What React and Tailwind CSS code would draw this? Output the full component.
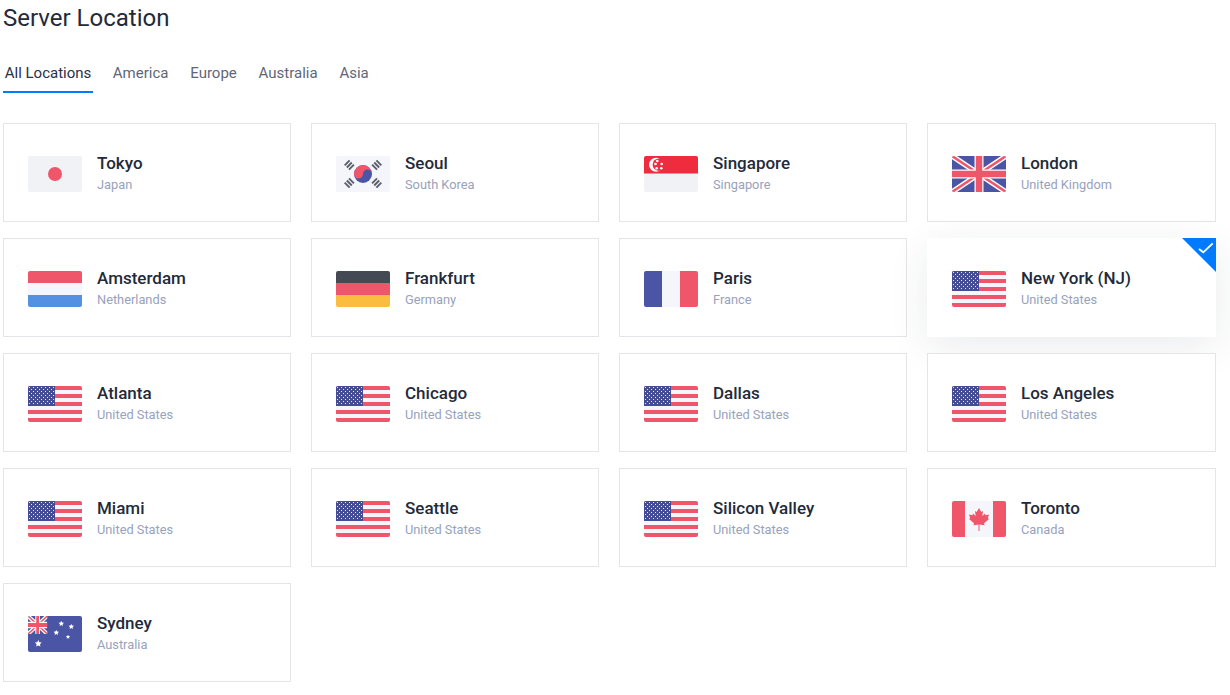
import React from "react";

const RED = "#f0566a";
const BLUE = "#4a55a5";
const NAVY = "#454c96";
const LIGHT = "#f1f2f6";
const PALE = "#f5f6fb";

const Frame = ({ children }) => (
  <svg width="54" height="36" viewBox="0 0 54 36" className="shrink-0">
    <defs>
      <clipPath id="flagClip">
        <rect width="54" height="36" rx="2" />
      </clipPath>
    </defs>
    <g clipPath="url(#flagClip)">{children}</g>
  </svg>
);

const Star = ({ x, y, r }) => {
  const pts = [];
  for (let i = 0; i < 10; i++) {
    const rad = i % 2 === 0 ? r : r * 0.5;
    const a = (Math.PI / 5) * i - Math.PI / 2;
    pts.push(`${(x + rad * Math.cos(a)).toFixed(2)},${(y + rad * Math.sin(a)).toFixed(2)}`);
  }
  return <polygon points={pts.join(" ")} fill="#fff" />;
};

const Japan = () => (
  <Frame>
    <rect width="54" height="36" fill={LIGHT} />
    <circle cx="27" cy="18" r="7" fill={RED} />
  </Frame>
);

const Trigram = ({ x, y, angle }) => (
  <g transform={`translate(${x} ${y}) rotate(${angle})`} fill="#5a5f6b">
    <rect x="-3.5" y="-4" width="7" height="1.9" />
    <rect x="-3.5" y="-0.95" width="7" height="1.9" />
    <rect x="-3.5" y="2.1" width="7" height="1.9" />
  </g>
);

const Korea = () => (
  <Frame>
    <rect width="54" height="36" fill={PALE} />
    <Trigram x={13.3} y={9} angle={-45} />
    <Trigram x={40.7} y={9} angle={45} />
    <Trigram x={13.3} y={27} angle={45} />
    <Trigram x={40.7} y={27} angle={-45} />
    <circle cx="27" cy="18" r="9" fill={BLUE} />
    <path d="M18 18a9 9 0 0 1 18 0a4.5 4.5 0 0 0-9 0a4.5 4.5 0 0 1-9 0z" fill={RED} />
  </Frame>
);

const Singapore = () => (
  <Frame>
    <rect width="54" height="36" fill={LIGHT} />
    <rect width="54" height="17.5" fill="#ef2b3d" />
    <circle cx="12" cy="8.7" r="7" fill="#fff" />
    <circle cx="14.8" cy="8.7" r="6.2" fill="#ef2b3d" />
    <circle cx="13.3" cy="5" r="1.3" fill="#fff" />
    <circle cx="17.7" cy="8" r="1.3" fill="#fff" />
    <circle cx="17.3" cy="12.3" r="1.3" fill="#fff" />
    <circle cx="12.7" cy="12.3" r="1.3" fill="#fff" />
    <circle cx="11.5" cy="8" r="1.3" fill="#fff" />
  </Frame>
);

const UK = () => (
  <Frame>
    <rect width="54" height="36" fill={BLUE} />
    <path d="M0 0L54 36M54 0L0 36" stroke="#fff" strokeWidth="5.5" />
    <path d="M0 0L54 36M54 0L0 36" stroke={RED} strokeWidth="2.5" />
    <path d="M27 0V36M0 18H54" stroke="#fff" strokeWidth="9" />
    <path d="M27 0V36M0 18H54" stroke={RED} strokeWidth="6.5" />
  </Frame>
);

const Bands = ({ a, b, c }) => (
  <Frame>
    <rect width="54" height="12" fill={a} />
    <rect y="12" width="54" height="12" fill={b} />
    <rect y="24" width="54" height="12" fill={c} />
  </Frame>
);

const France = () => (
  <Frame>
    <rect width="18" height="36" fill={BLUE} />
    <rect x="18" width="18" height="36" fill={PALE} />
    <rect x="36" width="18" height="36" fill={RED} />
  </Frame>
);

const US = () => {
  const dots = [];
  for (let r = 0; r < 9; r++) {
    const odd = r % 2 === 1;
    for (let c = 0; c < (odd ? 6 : 7); c++) {
      dots.push(<rect key={`${r}-${c}`} x={(odd ? 3 : 1) + c * 4} y={1 + r * 2} width="1" height="1" fill="#e9eaf5" />);
    }
  }
  return (
    <Frame>
      <rect width="54" height="36" fill={PALE} />
      {[0, 8, 16, 24, 32].map((y) => (
        <rect key={y} y={y} width="54" height="4" fill={RED} />
      ))}
      <rect width="27" height="20" fill={NAVY} />
      {dots}
    </Frame>
  );
};

const Canada = () => (
  <Frame>
    <rect width="54" height="36" fill={PALE} />
    <rect width="13" height="36" fill={RED} />
    <rect x="41" width="13" height="36" fill={RED} />
    <polygon
      points="27,7 29.3,11 31,10 30.3,15 33,12.5 33.6,14.2 37,13.6 35.8,17.3 37,18 32,22.2 32.6,24.2 27.5,23.5 27.5,30 26.5,30 26.5,23.5 21.4,24.2 22,22.2 17,18 18.2,17.3 17,13.6 20.4,14.2 21,12.5 23.7,15 23,10 24.7,11"
      fill={RED}
    />
  </Frame>
);

const Australia = () => (
  <Frame>
    <rect width="54" height="36" fill={BLUE} />
    <svg x="0" y="0" width="19.3" height="18" viewBox="0 0 54 36" preserveAspectRatio="none">
      <rect width="54" height="36" fill={BLUE} />
      <path d="M0 0L54 36M54 0L0 36" stroke="#fff" strokeWidth="9" />
      <path d="M0 0L54 36M54 0L0 36" stroke={RED} strokeWidth="3.5" />
      <path d="M27 0V36M0 18H54" stroke="#fff" strokeWidth="13" />
      <path d="M27 0V36M0 18H54" stroke={RED} strokeWidth="8" />
    </svg>
    <Star x={33.3} y={7.7} r={2.8} />
    <Star x={43.3} y={10.7} r={2.8} />
    <Star x={28.3} y={16.7} r={2.8} />
    <Star x={40} y={21} r={2.2} />
    <Star x={10.3} y={27.7} r={3.6} />
  </Frame>
);

const Netherlands = () => <Bands a={RED} b={PALE} c="#5591e3" />;
const Germany = () => <Bands a="#434a54" b={RED} c="#fbbd40" />;

const locations = [
  { city: "Tokyo", country: "Japan", Flag: Japan },
  { city: "Seoul", country: "South Korea", Flag: Korea },
  { city: "Singapore", country: "Singapore", Flag: Singapore },
  { city: "London", country: "United Kingdom", Flag: UK },
  { city: "Amsterdam", country: "Netherlands", Flag: Netherlands },
  { city: "Frankfurt", country: "Germany", Flag: Germany },
  { city: "Paris", country: "France", Flag: France },
  { city: "New York (NJ)", country: "United States", Flag: US, active: true },
  { city: "Atlanta", country: "United States", Flag: US },
  { city: "Chicago", country: "United States", Flag: US },
  { city: "Dallas", country: "United States", Flag: US },
  { city: "Los Angeles", country: "United States", Flag: US },
  { city: "Miami", country: "United States", Flag: US },
  { city: "Seattle", country: "United States", Flag: US },
  { city: "Silicon Valley", country: "United States", Flag: US },
  { city: "Toronto", country: "Canada", Flag: Canada },
  { city: "Sydney", country: "Australia", Flag: Australia },
];

const tabs = ["All Locations", "America", "Europe", "Australia", "Asia"];

const Card = ({ city, country, Flag, active }) => (
  <div
    className={
      active
        ? "relative flex h-[99px] items-start gap-[15px] overflow-hidden bg-white pl-[25px] pt-[33px] shadow-[0_10px_40px_rgba(30,40,70,0.09)]"
        : "relative flex h-[99px] items-start gap-[15px] border border-[#e3e5e8] bg-white pl-6 pt-8"
    }
  >
    <Flag />
    <div className="-mt-[5px]">
      <div className="text-[17px] leading-[24px] font-medium text-[#232a3a]">{city}</div>
      <div className="mt-[1px] text-[12.8px] leading-[18px] text-[#98a2bd]">{country}</div>
    </div>
    {active && (
      <svg width="34" height="34" viewBox="0 0 34 34" className="absolute right-0 top-0">
        <path d="M0 0H34V34z" fill="#007bff" />
        <path d="M17 11l4.3 3.3 9.4-9" fill="none" stroke="#fff" strokeWidth="1.8" />
      </svg>
    )}
  </div>
);

export default function App() {
  return (
    <div className="h-[695px] w-[1230px] overflow-hidden bg-white pl-[3px] font-['Roboto',sans-serif]">
      <div className="h-0 w-[280px] shadow-[0_0_6px_rgba(0,0,0,0.06)]"></div>
      <h1 className="pt-[3px] text-[24px] leading-[31px] font-normal text-[#232a3a]">Server Location</h1>
      <div className="mt-[24px] flex gap-[17.8px]">
        {tabs.map((tab, i) => (
          <div
            key={tab}
            className={
              i === 0
                ? "h-[35px] w-[90px] border-b-2 border-[#007bff] text-center text-[15px] leading-[30px] whitespace-nowrap text-[#2a3146]"
                : "h-[35px] px-[2px] text-[15px] leading-[30px] text-[#5f6678]"
            }
          >
            {tab}
          </div>
        ))}
      </div>
      <div className="mt-[30px] grid w-[1213px] grid-cols-[288px_288px_288px_289px] gap-x-5 gap-y-4">
        {locations.map((loc) => (
          <Card key={loc.city} {...loc} />
        ))}
      </div>
    </div>
  );
}
